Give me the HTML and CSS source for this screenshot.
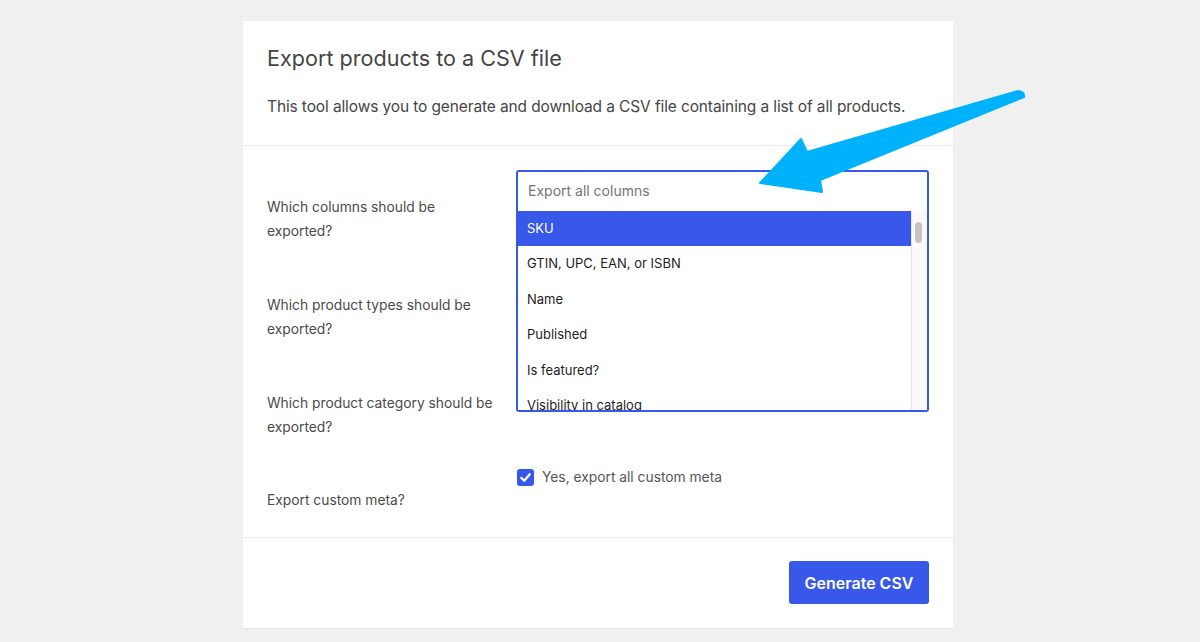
FILE: index.html
```html
<!DOCTYPE html>
<html lang="en">
<head>
<meta charset="utf-8">
<title>Export products</title>
<link rel="stylesheet" href="styles.css">
</head>
<body>
<div class="page">
  <div class="card">
    <header class="card-head">
      <h2 class="title">Export products to a CSV file</h2>
      <p class="desc">This tool allows you to generate and download a CSV file containing a list of all products.</p>
    </header>
    <section class="form">
      <div class="row r1">
        <div class="label">Which columns should be<br>exported?</div>
        <div class="field">
          <div class="select">
            <div class="select-box">Export all columns</div>
            <div class="dropdown">
              <ul class="options">
                <li class="opt active">SKU</li>
                <li class="opt">GTIN, UPC, EAN, or ISBN</li>
                <li class="opt">Name</li>
                <li class="opt">Published</li>
                <li class="opt">Is featured?</li>
                <li class="opt">Visibility in catalog</li>
              </ul>
              <div class="scrollbar"><div class="thumb"></div></div>
            </div>
          </div>
        </div>
      </div>
      <div class="row r2">
        <div class="label">Which product types should be<br>exported?</div>
        <div class="field"></div>
      </div>
      <div class="row r3">
        <div class="label">Which product category should be<br>exported?</div>
        <div class="field"></div>
      </div>
      <div class="row r4">
        <div class="label">Export custom meta?</div>
        <div class="field check-field">
          <span class="checkbox">
            <svg width="17" height="17" viewBox="0 0 17 17"><path d="M4.2 8.8 L7.2 11.8 L12.8 5.2" fill="none" stroke="#fff" stroke-width="2.2" stroke-linecap="round" stroke-linejoin="round"/></svg>
          </span>
          <span class="check-text">Yes, export all custom meta</span>
        </div>
      </div>
    </section>
    <footer class="card-foot">
      <button class="btn">Generate CSV</button>
    </footer>
  </div>
  <svg class="arrow" width="1200" height="642" viewBox="0 0 1200 642">
    <path d="M760 183 L801 139 L807 152 L1018 91 Q1025 92 1024 97 L820 180 L822 192 Z" fill="#00b2fb" stroke="#00b2fb" stroke-width="2" stroke-linejoin="round"/>
  </svg>
</div>
</body>
</html>
```
FILE: styles.css
```css
* { box-sizing: border-box; }
html, body { margin: 0; padding: 0; }
body {
  background: #f0f0f1;
  font-family: Inter, "Noto Sans", "Liberation Sans", sans-serif;
  color: #444;
}
.page {
  position: relative;
  width: 1200px;
  height: 642px;
  padding-top: 21px;
}
.card {
  width: 710px;
  height: 607px;
  margin-left: 243px;
  background: #fff;
  box-shadow: 0 1px 1px rgba(0,0,0,0.04);
  display: flex;
  flex-direction: column;
}
.card-head {
  padding: 24px 24px 0 24px;
  height: 125px;
  border-bottom: 1px solid #ececec;
}
.title {
  margin: 0;
  font-size: 21.6px;
  font-weight: 400;
  line-height: 26px;
  color: #454545;
}
.desc {
  margin: 26px 0 0 0;
  font-size: 15.5px;
  line-height: 20px;
  color: #454545;
  letter-spacing: -0.12px;
}
.form {
  padding: 24px 24px 0 24px;
  height: 392px;
  border-bottom: 1px solid #ececec;
}
.row {
  display: grid;
  grid-template-columns: 250px 1fr;
}
.r1, .r2, .r3 { height: 98px; }
.r4 { height: 72px; }
.label {
  align-self: center;
  font-size: 13.8px;
  line-height: 24px;
  color: #4a4a4a;
}
.select {
  position: relative;
  z-index: 2;
  margin-left: -1px;
}
.select-box {
  height: 41px;
  border: 2px solid #3858e9;
  border-bottom: none;
  border-radius: 3px 3px 0 0;
  padding: 0 10px;
  font-size: 14px;
  line-height: 37px;
  color: #757575;
  background: #fff;
}
.dropdown {
  position: absolute;
  left: 0;
  right: 0;
  top: 100%;
  height: 201px;
  border: 2px solid #3858e9;
  border-top: none;
  border-radius: 0 0 3px 3px;
  background: #fff;
  overflow: hidden;
  display: flex;
}
.options {
  list-style: none;
  margin: 0;
  padding: 0;
  flex: 1;
}
.opt {
  height: 35.4px;
  line-height: 35.4px;
  padding-left: 9px;
  font-size: 13px;
  color: #1e1e1e;
  white-space: nowrap;
}
.opt.active {
  background: #3858e9;
  color: #fff;
}
.scrollbar {
  width: 16px;
  background: #fafafa;
  border-left: 1px solid #e6e6e6;
  padding-top: 11px;
  padding-left: 3px;
}
.thumb {
  width: 7px;
  height: 21px;
  background: #c4c4c4;
  border-radius: 4px;
}
.check-field {
  display: flex;
  align-items: center;
  gap: 8px;
  padding-top: 5px;
  align-self: start;
}
.checkbox {
  width: 17px;
  height: 17px;
  background: #3858e9;
  border-radius: 3px;
  display: inline-flex;
}
.check-text {
  font-size: 13.8px;
  color: #555;
  line-height: 17px;
}
.card-foot {
  flex: 1;
  display: flex;
  justify-content: flex-end;
  align-items: flex-start;
  padding: 23px 24px 0 24px;
}
.btn {
  width: 140px;
  height: 43px;
  border: none;
  border-radius: 3px;
  background: #3858e9;
  color: #fff;
  font-family: Inter, "Noto Sans", "Liberation Sans", sans-serif;
  font-size: 16px;
  font-weight: 600;
  cursor: pointer;
}
.arrow {
  position: absolute;
  left: 0;
  top: 0;
  pointer-events: none;
  z-index: 5;
}
```
